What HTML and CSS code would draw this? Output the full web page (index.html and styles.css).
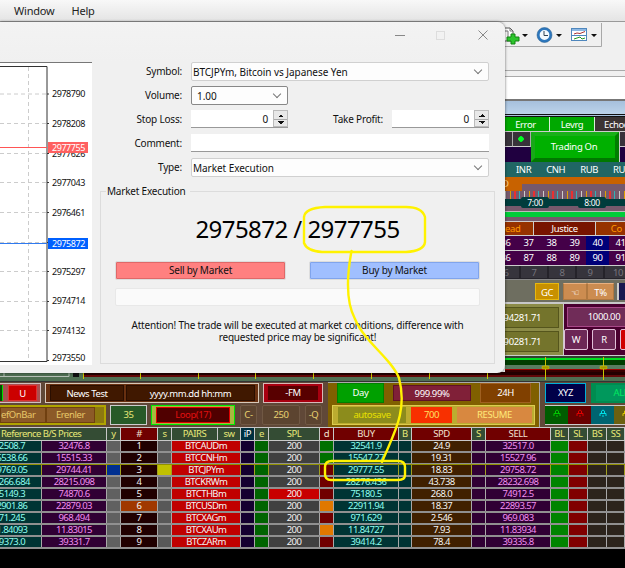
FILE: index.html
```html
<!DOCTYPE html>
<html lang="en">
<head>
    <meta charset="UTF-8">
    <meta name="viewport" content="width=device-width, initial-scale=1">
    <title>Order</title>
    <link rel="stylesheet" href="styles.css">
</head>
<body>
    <div class="menubar"><span>Window</span><span>Help</span></div>

    <div class="side">
        <div class="toolbar">
            <svg width="97" height="26" viewBox="0 0 97 26">
                <path d="M0 24.5H96.500V1" fill="none" stroke="#a8a8a8"/>
                <path d="M-4 6h9l3 3v10h-12z" fill="#fff" stroke="#555"/>
                <path d="M0 9h3v6M5 6v3h3" fill="none" stroke="#777"/>
                <path d="M6 12h4v3h4v4h-4v3H6v-3H2v-4h4z" fill="#2cc52c" stroke="#128512"/>
                <path d="M17 12h6l-3 3zM51 12h6l-3 3zM86 12h6l-3 3z" fill="#111"/>
                <circle cx="39.500" cy="13" r="6.200" fill="#f4faff" stroke="#2d77bd" stroke-width="2.600"/>
                <circle cx="39.500" cy="13" r="7.500" fill="none" stroke="#205888" stroke-width=".5"/>
                <path d="M39 9v4.500h4" fill="none" stroke="#345"/>
                <rect x="71.500" y="6.500" width="15" height="12" fill="#fff" stroke="#4f87bd" transform="translate(-5 0)"/>
                <path d="M67 8h14" stroke="#8db8e4" stroke-width="2"/>
                <path d="M67 13.500h14" stroke="#4f87bd"/>
                <path d="M69 12l3-1 3 .5 5-2" fill="none" stroke="#a33"/>
                <path d="M69 17l3-1 3-1 2 2 3-1" fill="none" stroke="#292"/>
            </svg>
        </div>
        <div class="blank"></div>
        <div class="caption"></div>

        <div class="tabs"><span>Error</span><span>Levrg</span><span class="dark">Echoe</span></div>
        <div class="trading">
            <div class="trading-left"><i></i><i class="dot"></i><b></b></div>
            <div class="trading-btn">Trading On</div>
            <div class="trading-right"></div>
        </div>
        <div class="currencies"><span>INR</span><span>CNH</span><span>RUB</span><span>RUB</span></div>
        <div class="orange-bar">D<i></i></div>
        <div class="timeline">
            <div class="ticks"></div>
            <div class="hours"><span>7:00</span><span>8:00</span></div>
        </div>
        <div class="green-line"></div>
        <div class="spread"><span>ead</span><span class="justice">Justice</span><span>Co</span></div>
        <div class="numbers"><span>36</span><span>37</span><span>38</span><span>39</span><span class="on">40</span><span>41</span></div>
        <div class="numbers"><span>86</span><span>87</span><span>88</span><span>89</span><span class="on">90</span><span>91</span></div>
        <div class="levels"><span>6</span><span>7</span><span>8</span><span>9</span><span>10</span></div>
        <div class="tools"><span class="gc">GC</span><span class="hand">&#9756;</span><span class="tp">T%</span><i></i></div>
        <div class="balance">
            <div class="olive"><span>94281.71</span><span>90281.71</span></div>
            <div class="plum">
                <span class="amount">1000.00</span>
                <div class="wr"><span>W</span><span>R</span><span class="stop"></span></div>
            </div>
        </div>
        <div class="slider">
            <svg width="120" height="18" viewBox="0 0 120 18">
                <path d="M0 0h120v18H0z" fill="#587c60"/>
                <path d="M0 .5h120" stroke="#ccc"/>
                <path d="M0 1h120v2H0z" fill="#304030"/>
                <path d="M0 3h120v2H0z" fill="#00dc20"/>
                <path d="M0 5h120v5H0z" fill="#003c00"/>
                <path d="M0 14h120v1H0z" fill="#a00000"/>
                <path d="M0 15h120v3H0z" fill="#380000"/>
                <path d="M40.500 2v16M98.500 2v16" stroke="#c8c000"/>
                <rect x="37" y="11" width="7" height="3" rx="1" fill="#a09800" stroke="#d8d000" stroke-width=".5"/>
                <rect x="95" y="11" width="7" height="3" rx="1" fill="#a09800" stroke="#d8d000" stroke-width=".5"/>
            </svg>
        </div>
    </div>

    <div class="strip">
        <svg width="625" height="12" viewBox="0 0 625 12">
            <path d="M-2 4.500H69V0M4 0v4" fill="none" stroke="#b4beb4"/>
            <rect x="73" y="1" width="6" height="4" fill="#111"/>
            <path d="M83 0h542v5H83z" fill="#240000"/>
            <path d="M83 4h542" stroke="#a01010"/>
            <path d="M83.500 1v6M140.500 1v6M198.500 1v6M255.500 1v6M313.500 1v6M371.500 1v6M429.500 1v6M487.500 1v6M545.500 0v8M603.500 0v8" stroke="#c8c800"/>
        </svg>
    </div>

    <div class="controls">
        <div class="left-controls">
            <div class="control-row">
                <div class="pink"><i></i><span>U</span></div>
                <div class="news"><span>News Test</span><span>yyyy.mm.dd hh:mm</span></div>
                <div class="fm"><span>-FM</span></div>
            </div>
            <div class="control-row second">
                <div class="refs"><span>efOnBar</span><span>Erenler</span></div>
                <div class="count">35</div>
                <div class="loop"><span>Loop(17)</span></div>
                <div class="flat c">C-</div>
                <div class="flat n">250</div>
                <div class="flat q">-Q</div>
            </div>
        </div>
        <div class="gold">
            <div class="gold-top"><span class="day">Day</span><span class="percent">999.99%</span><span class="h24">24H</span></div>
            <div class="gold-bottom"><span class="autosave">autosave</span><span class="seven">700</span><span class="resume">RESUME</span></div>
        </div>
        <div class="right-controls">
            <div class="xyz-row"><span class="xyz">XYZ</span><span class="all">ALL</span></div>
            <div class="locks">
                <span><svg viewBox="0 0 8 8"><path d="M2.500 4V2q1.500-2 3 0v2M1 7V4.500h6V7M3 7h2"/></svg></span>
                <span><svg viewBox="0 0 8 8"><path d="M2.500 4V2q1.500-2 3 0v2M1 7V4.500h6V7M3 7h2"/></svg></span>
                <span><svg viewBox="0 0 8 8"><path d="M2.500 4V2q1.500-2 3 0v2M1 7V4.500h6V7M3 7h2"/></svg></span>
                <span><svg viewBox="0 0 8 8"><path d="M2.500 4V2q1.500-2 3 0v2M1 7V4.500h6V7M3 7h2"/></svg></span>
            </div>
        </div>
    </div>

    <div class="quotes">
        <div class="row head"><b class="wide">Reference B/S Prices</b><b>y</b><b class="red">#</b><b>s</b><b class="pairs"><u>PAIRS</u><u>sw</u></b><b class="ip">iP</b><b>e</b><b>SPL</b><b class="red">d</b><b class="red">BUY</b><b>B</b><b class="red">SPD</b><b>S</b><b class="red">SELL</b><b>BL</b><b>SL</b><b>BS</b><b>SS</b><b></b></div>
        <div class="row"><b>32508.7</b><b>32476.8</b><b></b><b>1</b><b></b><b>BTCAUDm</b><b></b><b></b><b>200</b><b class="up"></b><b>32541.9</b><b></b><b>24.9</b><b></b><b>32517.0</b><b></b><b></b><b></b><b></b><b></b></div>
        <div class="row"><b>15538.66</b><b>15515.33</b><b></b><b>2</b><b></b><b>BTCCNHm</b><b></b><b></b><b>200</b><b class="up"></b><b>15547.27</b><b></b><b>19.31</b><b></b><b>15527.96</b><b></b><b></b><b></b><b></b><b></b></div>
        <div class="row current"><b>29769.05</b><b>29744.41</b><b class="blue"></b><b>3</b><b class="yellow"></b><b>BTCJPYm</b><b></b><b></b><b>200</b><b></b><b>29777.55</b><b></b><b>18.83</b><b></b><b>29758.72</b><b></b><b></b><b></b><b></b><b></b></div>
        <div class="row"><b>28266.684</b><b>28215.098</b><b></b><b>4</b><b></b><b>BTCKRWm</b><b></b><b></b><b>200</b><b></b><b>28276.436</b><b></b><b>43.738</b><b></b><b>28232.698</b><b></b><b></b><b></b><b></b><b></b></div>
        <div class="row"><b>75149.3</b><b>74870.6</b><b></b><b>5</b><b></b><b>BTCTHBm</b><b></b><b></b><b class="hot">200</b><b></b><b>75180.5</b><b></b><b>268.0</b><b></b><b>74912.5</b><b></b><b></b><b></b><b></b><b></b></div>
        <div class="row"><b>22901.86</b><b>22879.03</b><b></b><b class="rust">6</b><b></b><b>BTCUSDm</b><b></b><b></b><b>200</b><b class="mid"></b><b>22911.94</b><b></b><b>18.37</b><b></b><b>22893.57</b><b></b><b></b><b></b><b></b><b></b></div>
        <div class="row"><b>971.245</b><b>968.494</b><b></b><b>7</b><b></b><b>BTCXAGm</b><b></b><b></b><b>200</b><b></b><b>971.629</b><b></b><b>2.546</b><b></b><b>969.083</b><b></b><b></b><b></b><b></b><b></b></div>
        <div class="row"><b>11.84093</b><b>11.83015</b><b></b><b>8</b><b></b><b>BTCXAUm</b><b></b><b></b><b>200</b><b class="mid"></b><b>11.84727</b><b></b><b>7.93</b><b></b><b>11.83934</b><b></b><b></b><b></b><b></b><b></b></div>
        <div class="row"><b>39373.0</b><b>39331.7</b><b></b><b>9</b><b></b><b>BTCZARm</b><b></b><b></b><b>200</b><b></b><b>39414.2</b><b></b><b>78.4</b><b></b><b>39335.8</b><b></b><b></b><b></b><b></b><b></b></div>
    </div>

    <!-- order window -->
    <div class="dialog">
        <div class="titlebar">
            <svg width="110" height="24" viewBox="0 0 110 24">
                <path d="M10 13.500h10M93.500 8.500l9 9m0-9l-9 9" fill="none" stroke="#888"/>
                <rect x="51.500" y="9.500" width="8" height="8" fill="none" stroke="#ddd"/>
            </svg>
        </div>
        <div class="dialog-body">
            <svg class="chart" width="92" height="303" viewBox="0 62 92 303">
                <path d="M0 62h92v303H0z" fill="#fff"/>
                <path d="M0 62.500h92" stroke="#777"/>
                <path d="M0 94h46M0 123.500h46M0 153.500h46M0 182.500h46M0 212.500h46M0 242.500h46M0 271.500h46M0 301.500h46M0 330.500h46M28.500 67v293" stroke="#ccc" stroke-dasharray="4 3"/>
                <path d="M0 66.500h47v295H0M47 94h2M47 123.500h2M47 153.500h2M47 182.500h2M47 212.500h2M47 242.500h2M47 271.500h2M47 301.500h2M47 330.500h2M47 360.500h2" fill="none" stroke="#333"/>
                <path d="M0 147.500h47" stroke="#f55"/>
                <path d="M0 243.500h47" stroke="#2f7af0"/>
                <g class="axis">
                    <text x="52" y="97">2978790</text>
                    <text x="52" y="127">2978208</text>
                    <text x="52" y="157">2977626</text>
                    <text x="52" y="186">2977043</text>
                    <text x="52" y="216">2976461</text>
                    <text x="52" y="275">2975297</text>
                    <text x="52" y="304">2974714</text>
                    <text x="52" y="334">2974132</text>
                    <text x="52" y="361">2973550</text>
                    <path d="M48 142h40v11H48z" fill="#ff6060"/>
                    <path d="M48 238h40v11H48z" fill="#0060ff"/>
                    <text class="light" x="52" y="151">2977755</text>
                    <text class="light" x="52" y="247">2975872</text>
                </g>
            </svg>
            <div class="order">
                <div class="form-row"><label>Symbol:</label><div class="combo">BTCJPYm, Bitcoin vs Japanese Yen</div></div>
                <div class="form-row"><label>Volume:</label><div class="combo volume">1.00</div></div>
                <div class="form-row">
                    <label>Stop Loss:</label><div class="spin"><span>0</span><i></i></div>
                    <label class="take">Take Profit:</label><div class="spin"><span>0</span><i></i></div>
                </div>
                <div class="form-row"><label>Comment:</label><div class="input"></div></div>
                <div class="form-row"><label>Type:</label><div class="combo">Market Execution</div></div>
                <fieldset class="execution">
                    <legend>Market Execution</legend>
                    <div class="price">2975872 / 2977755</div>
                    <div class="deal-buttons"><div class="sell">Sell by Market</div><div class="buy">Buy by Market</div></div>
                    <div class="progress"></div>
                    <p>Attention! The trade will be executed at market conditions, difference with<br>requested price may be significant!</p>
                </fieldset>
            </div>
        </div>
    </div>

    <!-- marker strokes over the windows -->
    <svg class="marker" width="625" height="568" viewBox="0 0 625 568">
        <path d="M325 207q-20 1-21 10v26q3 8 18 9h84q18-1 19-10v-25q-3-10-19-10z"/>
        <path d="M351.500 251C347 275 346 302 355 319C365 343 391 358 399 378C408 412 393 435 382 462"/>
        <path d="M332 461h66q7 0 7 6v8q0 5-7 5h-67q-6 0-6-6v-7q0-6 7-6z"/>
    </svg>
</body>
</html>
```
FILE: styles.css
```css
* {
    box-sizing: border-box;
}

body {
    margin: 0;
    width: 625px;
    height: 568px;
    overflow: hidden;
    position: relative;
    background: #000;
    font-family: "Noto Sans", "DejaVu Sans", sans-serif;
    font-size: 9.5px;
    letter-spacing: -0.4px;
    color: #fff;
}

.menubar {
    height: 22px;
    padding: 0 14px;
    display: flex;
    gap: 17px;
    align-items: center;
    font-size: 11px;
    letter-spacing: -0.2px;
    color: #222;
    background: linear-gradient(#f8f8f8, #e4e4e4);
    border-bottom: 1px solid #999;
    line-height: 24px;
}

/* right part of the terminal */
.side {
    height: 350px;
    padding-left: 505px;
    background: #f0f0f0;
    display: flex;
    flex-direction: column;
}

.side > div {
    flex: none;
}

.toolbar {
    height: 49px;
    border-bottom: 1px solid #aaa;
}

.toolbar svg {
    display: block;
}

.blank {
    height: 28px;
    margin-top: 5px;
    background: #fff;
    border-top: 1px solid #aaa;
    border-bottom: 5px solid #f4f4f4;
}

.caption {
    height: 18px;
    margin-top: -5px;
    border-top: 2px solid #777;
    border-bottom: 3px double #111;
    background: linear-gradient(#a6c0dc, #bcd3ea);
}

.tabs {
    height: 15px;
    display: flex;
    line-height: 15px;
    text-align: center;
    border-bottom: 1px solid #ccc;
    background: #00a800;
}

.tabs span {
    width: 45px;
    border-right: 1px solid #d8efd8;
    overflow: hidden;
}

.tabs span:first-child {
    padding-right: 3px;
}

.tabs .dark {
    flex: 1;
    background: #3c3434;
    border: 0;
    text-align: left;
    padding-left: 9px;
}

.trading {
    height: 30px;
    display: flex;
    background: #200040;
}

.trading-left {
    width: 26px;
    display: flex;
    flex-wrap: wrap;
}

.trading-left i {
    width: 8px;
    height: 15px;
    background: #38323a;
    border-right: 1px solid #aaa;
    border-bottom: 1px solid #ccc;
}

.trading-left .dot {
    width: 18px;
    background: radial-gradient(circle at 8px 7px, #0f2 2.5px, #38323a 3px);
}

.trading-left b {
    width: 100%;
    height: 14px;
}

.trading-btn {
    width: 88px;
    padding-right: 2px;
    border: 4px solid #009800;
    border-color: #18b018 #007e00 #007800 #18a818;
    background: #00b000;
    text-align: center;
    line-height: 22px;
    font-size: 9.5px;
    letter-spacing: -0.3px;
}

.trading-right {
    flex: 1;
    border-left: 1px solid #ccc;
    background: linear-gradient(#38323a 14px, #ccc 14px, #ccc 15px, #200040 15px);
}

.currencies {
    height: 15px;
    padding-left: 11px;
    background: #206664;
    display: flex;
    gap: 15px;
    line-height: 15px;
    overflow: hidden;
}

.currencies span:first-child {
    width: 16px;
}

.orange-bar {
    height: 14px;
    background: #c86200;
    color: #ffd080;
    display: flex;
    line-height: 13px;
    overflow: hidden;
    text-indent: -3px;
}

.orange-bar i {
    height: 7px;
    flex: 1;
    margin-top: 7px;
    margin-left: 13px;
    background: #76596c;
}

.timeline {
    height: 20px;
    background: #76596c;
}

.ticks {
    height: 8px;
    background: repeating-linear-gradient(90deg, #ccc 0 1px, #76596c 1px 5px, #e0a000 5px 6px, #76596c 6px 9px, #e83030 9px 11px, #76596c 11px 14px, #30b0b8 14px 15px, #76596c 15px 19px);
}

.hours {
    display: flex;
    gap: 29px;
    padding-left: 16px;
    height: 7px;
    background: #003c3c;
    font-size: 8.5px;
}

.hours span {
    width: 28px;
    height: 11px;
    margin-top: -2px;
    border-radius: 2px;
    background: #003c3c;
    text-align: center;
    line-height: 11px;
}

.green-line {
    height: 10px;
    background: #00cc38;
    border-top: 1px solid #bbb;
    border-bottom: 4px solid #76596c;
}

.spread {
    height: 15px;
    display: flex;
    background: #963200;
    border-top: 1px solid #ccc;
    border-bottom: 1px solid #ccc;
    line-height: 14px;
    color: #ff9800;
}

.spread span {
    width: 30px;
}

.spread .justice {
    width: 66px;
    text-align: center;
    color: #fff;
    background: #781400;
    border: solid #ccc;
    border-width: 0 1px;
}

.spread span:last-child {
    padding-left: 15px;
}

.numbers {
    height: 15px;
    background: #440048;
    border-bottom: 1px solid #ccc;
    display: flex;
    line-height: 14px;
    overflow: hidden;
}

.numbers span {
    flex: none;
    width: 23px;
    text-align: center;
}

.numbers span:first-child {
    margin-left: -11px;
}

.numbers .on {
    background: #000078;
}

.levels {
    height: 14px;
    display: flex;
    overflow: hidden;
    background: #36343c;
    border-bottom: 1px solid #888;
    color: #77757c;
    line-height: 13px;
}

.levels span {
    flex: none;
    width: 28px;
    text-align: center;
    border: solid #25232a;
    border-width: 0 2px 1px 0;
}

.levels span:first-child {
    margin-left: -12px;
}

.tools {
    height: 24px;
    display: flex;
    padding: 3px 0 2px 30px;
    background: #6e6e60;
    border-bottom: 2px solid #c8c8c8;
    text-align: center;
    line-height: 17px;
}

.tools span {
    border: 1px solid #b07840;
    border-top-color: #e8b080;
    background: #cc8c50;
    width: 24px;
}

.tools .gc {
    background: #c89000;
    border-color: #e8b810;
    margin-right: 4px;
}

.tools .tp {
    width: 27px;
}

.tools i {
    border-left: 2px solid #ccc;
    margin-left: 3px;
    background: #181850;
    flex: 1;
}

.balance {
    height: 51px;
    display: flex;
    text-align: center;
}

.olive {
    width: 59px;
    background: #8c8c48;
    padding: 3px 4px 3px 0;
    border-right: 1px solid #ccc;
    display: grid;
    gap: 3px;
}

.olive span {
    display: flex;
    justify-content: flex-end;
    min-width: 0;
    border: 1px solid #55551c;
    border-left: 0;
    background: #74742c;
    line-height: 19px;
    padding-right: 17px;
}

.plum {
    flex: 1;
    min-width: 0;
    background: #4a0030;
    padding: 3px 0 3px 3px;
    margin-left: 0;
}

.amount {
    display: block;
    width: 74px;
    height: 20px;
    border: 1px solid #a84888;
    background: #702c58;
    line-height: 18px;
    margin-bottom: 2px;
}

.wr {
    display: flex;
    gap: 4px;
    margin-left: -3px;
}

.wr span {
    width: 24px;
    height: 21px;
    flex: none;
    border: 1px solid #e0c0d8;
    border-radius: 2px;
    background: #6c2856;
    line-height: 19px;
}

.wr .stop {
    background: #d00000;
}

.slider {
    height: 17px;
    overflow: hidden;
}

.slider svg {
    display: block;
}

.strip {
    height: 10px;
    background: #4f7053;
    border-bottom: 1px solid #333;
}

.strip svg {
    display: block;
}

/* button block above the quotes */
.controls {
    height: 45px;
    display: flex;
    background: #604838;
    text-align: center;
    line-height: 16px;
}

.left-controls {
    width: 328px;
    padding-top: 1px;
}

.control-row {
    height: 20px;
    display: flex;
}

.second {
    margin-top: 2px;
}

.pink {
    width: 41px;
    margin-right: 4px;
    border: 1px solid #d0c0c0;
    border-left: 0;
    background: #a85050;
    display: flex;
    gap: 5px;
    padding: 1px 3px 1px 0;
}

.pink i {
    width: 3px;
    background: #004c00;
    border-right: 1px solid #0d0;
}

.pink span {
    flex: 1;
    background: #cc0000;
    border: 1px solid #e03030;
}

.news {
    width: 214px;
    margin-right: 4px;
    display: flex;
    gap: 2px;
    padding: 1px 3px 1px 4px;
    border: 1px solid #d8c8b8;
    background: #683010;
}

.news span {
    background: #401800;
    border: 1px solid #2a0e00;
    width: 74px;
    line-height: 15px;
}

.news span + span {
    flex: 1;
}

.fm {
    width: 60px;
    padding: 2px 4px;
    border: 1px solid #d8b8b8;
    background: #a80010;
    line-height: 14px;
}

.fm span {
    display: block;
    height: 14px;
    background: #580000;
}

.refs {
    width: 106px;
    padding: 0 9px 0 0;
    margin-right: 4px;
    display: flex;
    background: #8c7810;
    border: 2px solid #b0a400;
    border-left: 0;
    color: #e8c868;
    line-height: 14px;
}

.refs span {
    width: 50px;
    background: #8c5a28;
    border: 1px solid #704010;
    text-align: center;
}

.refs span:first-child {
    width: 46px;
    padding-right: 14px;
}

.count {
    width: 37px;
    margin-right: 4px;
    border: 1px solid #ccc;
    background: #285a28;
    color: #e8e878;
    line-height: 18px;
}

.loop {
    width: 84px;
    padding: 1px 4px;
    margin-right: 5px;
    border: 1px solid #00e800;
    background: #a8b840;
}

.loop span {
    display: block;
    border: 1px solid #e00000;
    background: #500000;
    color: #e01010;
    line-height: 14px;
}

.flat {
    width: 17px;
    margin-right: 5px;
    border: 1px solid #705844;
    border-radius: 2px;
    background: #5c4430;
    color: #e8d070;
    line-height: 18px;
}

.n {
    width: 38px;
}

.gold {
    width: 212px;
    padding: 0 4px;
    background: #806000;
    border: solid #aaa;
    border-width: 1px 1px 0 0;
}

.gold-top {
    display: flex;
    height: 20px;
    padding-left: 5px;
    align-items: center;
}

.gold-top span {
    line-height: 15px;
    height: 16px;
}

.gold-top .day {
    width: 47px;
    height: 20px;
    margin-right: 9px;
    background: #00a000;
    border: 1px solid #008000;
    line-height: 18px;
}

.percent {
    width: 78px;
    background: #802038;
    border: 1px solid #601028;
}

.gold-top .h24 {
    width: 51px;
    height: 20px;
    margin-left: 9px;
    background: #804000;
    border: 1px solid #a06020;
    line-height: 18px;
}

.gold-bottom {
    display: flex;
    height: 20px;
    margin-top: 2px;
    padding: 1px 2px 1px 5px;
    gap: 5px;
    background: #bcac30;
    border: 1px solid #dccc50;
    line-height: 16px;
}

.autosave {
    width: 68px;
    background: #8c8c1c;
    color: #e8e000;
}

.seven {
    width: 41px;
    background: #f83000;
    color: #ffe060;
}

.resume {
    flex: 1;
    background: #d88840;
    color: #ffe878;
}

.right-controls {
    width: 85px;
    padding: 1px 0 0 5px;
    overflow: hidden;
}

.xyz-row {
    display: flex;
    height: 20px;
    gap: 5px;
    line-height: 18px;
}

.xyz-row span {
    flex: none;
}

.xyz {
    width: 41px;
    border: 1px solid #00b0d8;
    background: #000048;
}

.all {
    width: 60px;
    border: 4px solid #008c50;
    border-width: 2px 5px;
    background: #00985c;
    color: #00e860;
    line-height: 16px;
}

.locks {
    display: flex;
    height: 20px;
    margin-top: 2px;
    border-top: 1px solid #ccc;
    border-bottom: 1px solid #ccc;
}

.locks span {
    flex: none;
    width: 23px;
    background: #005c00;
    color: #00c800;
    line-height: 16px;
}

.locks span:nth-child(2) {
    background: #680000;
    color: #e00000;
}

.locks span:nth-child(3) {
    background: #006470;
    color: #00e0e8;
}

.locks span:nth-child(4) {
    background: #6c6010;
    color: #e0c800;
}

.locks svg {
    width: 8px;
    height: 8px;
    fill: none;
    stroke: currentColor;
}

/* quotes */
.quotes {
    color: #f4f4f4;
}

.row {
    display: grid;
    grid-template-columns: 41px 64px 13px 36px 13px 68px 13px 13px 50px 13px 64px 12px 59px 13px 64px 17px 18px 18px 17px 1px;
    gap: 1px;
    height: 12px;
    background: #a8a8a8;
    border-bottom: 2px solid #909090;
    line-height: 10px;
}

.row b {
    font-weight: normal;
    font-size: 9.5px;
    letter-spacing: -0.6px;
    text-align: center;
    white-space: nowrap;
}

.row b:nth-child(1) {
    background: #003434;
    color: #90fff0;
    display: flex;
    justify-content: center;
    padding-right: 22px;
}

.row b:nth-child(2) {
    background: #300034;
    color: #f090f0;
}

.row b:nth-child(3) { background: #606060; }
.row b:nth-child(4) { background: #200000; }
.row b:nth-child(5) { background: #585858; }
.row b:nth-child(6) { background: #c00000; }
.row b:nth-child(7) { background: #140030; }
.row b:nth-child(8) { background: #006400; }
.row b:nth-child(9) { background: #404040; }
.row b:nth-child(10) { background: #700000; }
.row b:nth-child(11) { background: #003434; color: #90fff0; }
.row b:nth-child(12) { background: #003434; }
.row b:nth-child(13) { background: #402000; }
.row b:nth-child(14) { background: #300034; }
.row b:nth-child(15) { background: #300034; color: #f090f0; }
.row b:nth-child(16) { background: #008400; }
.row b:nth-child(17) { background: #800000; }
.row b:nth-child(n+18) { background: #2c241c; }

.row b.up { background: #007000; }
.row b.mid { background: #e07800; }
.row b.hot { background: #c80000; }
.row b.rust { background: #a03800; }
.row b.blue { background: #003090; }
.row b.yellow { background: #c0c000; }

.current {
    margin-top: -1px;
    height: 13px;
    background: #a0a020;
    border-top: 1px solid #909000;
}

.row.head {
    height: 14px;
    background: #c8c8c8;
    border: solid #c8c8c8;
    border-width: 1px 0;
    line-height: 12px;
}

.row.head b {
    display: block;
    padding: 0;
    background: #344c34;
    color: #e8e878;
    letter-spacing: -0.4px;
}

.row.head .wide {
    grid-column: span 2;
    text-align: left;
    padding-left: 1px;
    letter-spacing: -0.55px;
}

.row.head .red {
    background: #700000;
    color: #f0e0d0;
}

.row.head .ip {
    background: #003040;
    color: #fff;
}

.row.head .pairs {
    display: flex;
}

.pairs u {
    width: 46px;
    text-decoration: none;
    border-right: 1px solid #c8c8c8;
}

.pairs u + u {
    width: 22px;
    border: 0;
}

/* order window */
.dialog {
    position: absolute;
    left: 0;
    top: 22px;
    width: 505px;
    height: 351px;
    background: #f0f0f0;
    border-radius: 0 8px 8px 0;
    box-shadow: 0 0 3px rgba(0, 0, 0, 0.6);
    color: #111;
    font-size: 10px;
    letter-spacing: -0.2px;
}

.titlebar {
    height: 40px;
    display: flex;
    justify-content: flex-end;
    padding-right: 10px;
    background: linear-gradient(#f3f3f3, #f0f0f0);
    border-radius: 0 8px 0 0;
}

.dialog-body {
    display: flex;
}

.chart {
    flex: none;
    display: block;
}

.axis {
    font-size: 9px;
    letter-spacing: -0.45px;
    fill: #111;
}

.axis .light {
    fill: #fff;
}

.order {
    width: 403px;
    margin-left: 8px;
}

.form-row {
    height: 24px;
    display: flex;
    align-items: flex-start;
    line-height: 18px;
}

.form-row label {
    width: 82px;
    margin-right: 9px;
    text-align: right;
}

.form-row .take {
    width: 96px;
    margin-right: 8px;
    padding-right: 1px;
}

.combo {
    width: 298px;
    height: 19px;
    padding-left: 1px;
    border: 1px solid #d0d0d0;
    border-radius: 2px;
    background: #fdfdfd;
    display: flex;
    justify-content: space-between;
    letter-spacing: -0.05px;
}

.combo::after {
    content: "";
    width: 5px;
    height: 5px;
    margin: 4px 7px 0 0;
    border: solid #777;
    border-width: 0 1px 1px 0;
    transform: rotate(45deg);
}

.volume {
    width: 97px;
    padding-left: 5px;
    border-color: #888;
}

.spin {
    width: 97px;
    height: 18px;
    display: flex;
    justify-content: flex-end;
    background: #fff;
    border-bottom: 1px solid #999;
}

.spin span {
    margin-right: 5px;
}

.spin i {
    width: 15px;
    border: 1px solid #bbb;
    background:
        conic-gradient(from 135deg at 50% 3px, #111 90deg, transparent 0) 4px 0 / 6px 6px no-repeat,
        conic-gradient(from -45deg at 50% 3px, #111 90deg, transparent 0) 4px 10px / 6px 6px no-repeat,
        linear-gradient(#e8e8e8 8px, #aaa 8px, #aaa 9px, #e8e8e8 9px);
}

.input {
    width: 298px;
    height: 18px;
    background: #fff;
    border-bottom: 1px solid #999;
}

.execution {
    height: 180px;
    width: 395px;
    margin: 2px 0 0;
    padding: 0 14px;
    border: 1px solid #dcdcdc;
}

.execution legend {
    padding: 0 4px 0 1px;
    margin-left: -9px;
    line-height: 14px;
}

.price {
    height: 63px;
    padding-top: 13px;
    text-align: center;
    font-size: 24px;
    line-height: 35px;
    letter-spacing: -0.55px;
    color: #000;
}

.deal-buttons {
    display: flex;
    justify-content: space-between;
    text-align: center;
    line-height: 17px;
}

.sell,
.buy {
    width: 171px;
    height: 19px;
    border: 1px solid #ddd;
    border-radius: 2px;
    background: #ff8080;
    box-shadow: inset 0 0 0 1px #e06868;
}

.buy {
    background: #a0bfff;
    box-shadow: inset 0 0 0 1px #80a4ec;
}

.progress {
    height: 18px;
    margin-top: 8px;
    border: 1px solid #e8e8e8;
    border-radius: 2px;
    background: #fafafa;
}

.execution p {
    margin: 13px -10px 0;
    text-align: center;
    line-height: 12px;
}

.marker {
    position: absolute;
    left: 0;
    top: 0;
    fill: none;
    stroke: #fff200;
    stroke-width: 2.4;
    stroke-linecap: round;
}
```
